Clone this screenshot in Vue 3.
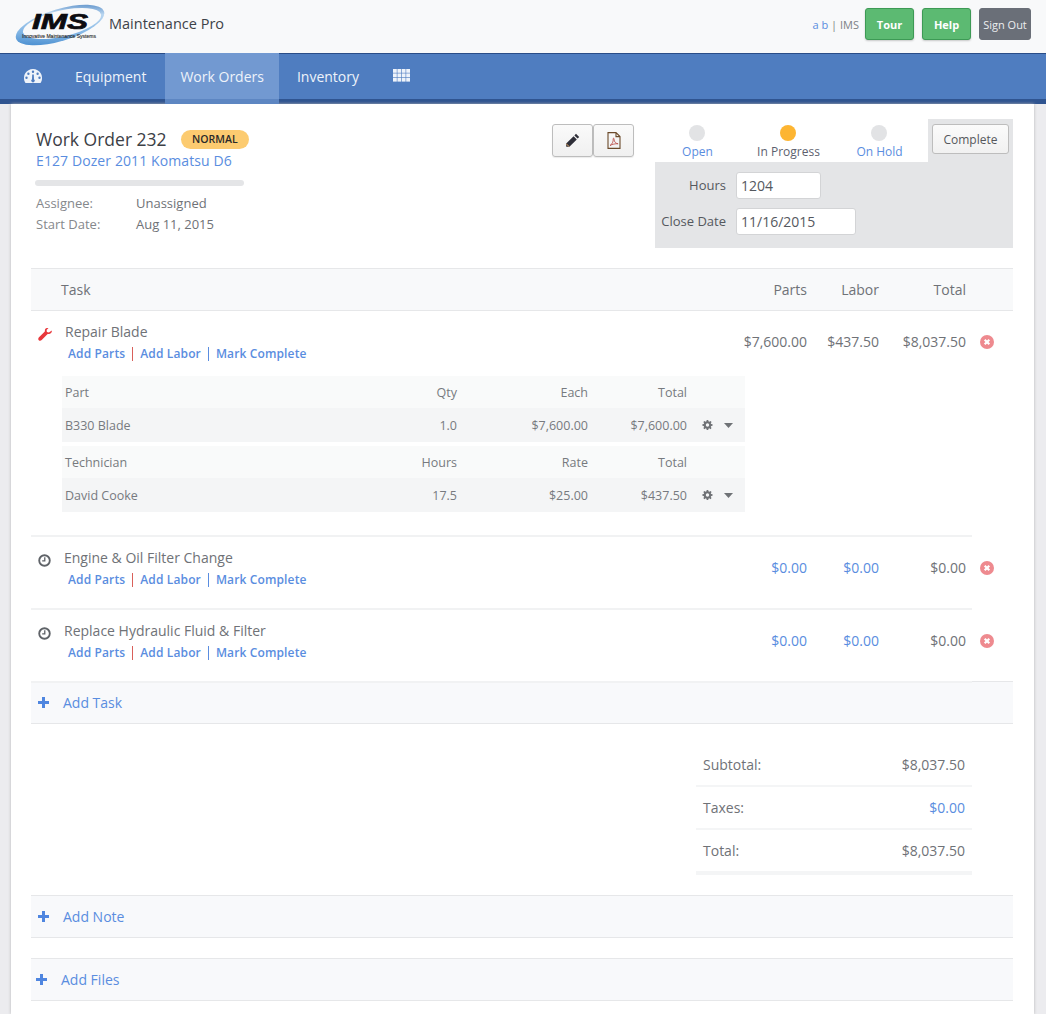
<script setup>
const tasks = [
  { name: 'Repair Blade', icon: 'wrench', parts: '$7,600.00', labor: '$437.50', total: '$8,037.50', zero: false, detail: true },
  { name: 'Engine & Oil Filter Change', icon: 'clock', parts: '$0.00', labor: '$0.00', total: '$0.00', zero: true },
  { name: 'Replace Hydraulic Fluid & Filter', icon: 'clock', parts: '$0.00', labor: '$0.00', total: '$0.00', zero: true }
]
const subtables = [
  { head: ['Part', 'Qty', 'Each', 'Total'], row: ['B330 Blade', '1.0', '$7,600.00', '$7,600.00'] },
  { head: ['Technician', 'Hours', 'Rate', 'Total'], row: ['David Cooke', '17.5', '$25.00', '$437.50'] }
]
const gear = 'M8 1.2h1.9l.3 1.7 1.1.5 1.5-1 1.3 1.3-1 1.5.5 1.1 1.7.3v1.9l-1.7.3-.5 1.1 1 1.5-1.3 1.3-1.5-1-1.1.5-.3 1.7H8l-.3-1.7-1.1-.5-1.5 1-1.3-1.3 1-1.5-.5-1.1-1.7-.3V6.6l1.7-.3.5-1.1-1-1.5 1.3-1.3 1.5 1 1.1-.5zM9 5.400a2.100 2.100 0 1 0 0 4.200a2.100 2.100 0 0 0 0-4.200z'
</script>

<template>
  <div class="page">
    <header class="top">
      <div class="brand">
        <svg class="logo" viewBox="0 0 90 42" width="90" height="42">
          <defs>
            <linearGradient id="sw" x1="0" y1="1" x2="1" y2="0">
              <stop offset="0" stop-color="#2a78c4" />
              <stop offset="0.35" stop-color="#7fb4e4" />
              <stop offset="0.7" stop-color="#b9d6f0" />
              <stop offset="1" stop-color="#1f62ae" />
            </linearGradient>
          </defs>
          <ellipse cx="45" cy="21" rx="46" ry="16" transform="rotate(-17 45 21)" fill="url(#sw)" />
          <ellipse cx="47" cy="19.500" rx="40" ry="13" transform="rotate(-13 47 19.500)" fill="#f8f9fa" />
          <text x="17" y="25" textLength="56" lengthAdjust="spacingAndGlyphs" class="logo-ims">IMS</text>
          <text x="7" y="34" textLength="74" lengthAdjust="spacingAndGlyphs" class="logo-sub">Innovative Maintenance Systems</text>
        </svg>
        <span class="brand-name">Maintenance Pro</span>
      </div>
      <div class="top-right">
        <span class="user"><a>a b</a> | IMS</span>
        <button class="btn-green">Tour</button>
        <button class="btn-green">Help</button>
        <button class="btn-dark">Sign Out</button>
      </div>
    </header>

    <nav class="nav">
      <span class="nav-icon gauge">
        <svg viewBox="0 0 18 14" width="18" height="14">
          <path fill-rule="evenodd" d="M9 0a9 9 0 0 1 8 13.200l-.5.800H1.500l-.5-.800A9 9 0 0 1 9 0zM9 1.500a1.200 1.200 0 1 0 0 2.400 1.200 1.200 0 0 0 0-2.400zM4.400 3.500a1.200 1.200 0 1 0 0 2.400 1.200 1.200 0 0 0 0-2.400zM13.600 3.500a1.200 1.200 0 1 0 0 2.400 1.200 1.200 0 0 0 0-2.400zM2.500 7.500a1.200 1.200 0 1 0 0 2.400 1.200 1.200 0 0 0 0-2.400zM15.500 7.500a1.200 1.200 0 1 0 0 2.400 1.200 1.200 0 0 0 0-2.400zM8.200 5.500l-.2 4.700a1.700 1.700 0 1 0 2 0l-.2-4.700z" fill="#eef3fa" />
        </svg>
      </span>
      <a class="tab tab-eq">Equipment</a>
      <a class="tab active">Work Orders</a>
      <a class="tab tab-inv">Inventory</a>
      <span class="nav-icon grid-ic">
        <svg viewBox="0 0 17 13" width="17" height="13" fill="#eef3fa">
          <template v-for="r in 3" :key="r">
            <rect v-for="c in 4" :key="c" :x="(c - 1) * 4.4" :y="(r - 1) * 4.4" width="3.800" height="3.800" />
          </template>
        </svg>
      </span>
    </nav>

    <main class="card">
      <section class="summary-top">
        <div class="wo-info">
          <div class="wo-title">
            <h1>Work Order 232</h1>
            <span class="badge">NORMAL</span>
          </div>
          <a class="wo-sub">E127 Dozer 2011 Komatsu D6</a>
          <div class="progress"></div>
          <dl class="meta">
            <dt>Assignee:</dt><dd>Unassigned</dd>
            <dt>Start Date:</dt><dd>Aug 11, 2015</dd>
          </dl>
        </div>
        <div class="tools">
          <button class="tool">
            <svg viewBox="0 0 15 15" width="15" height="15">
              <path d="M11 .8l3.200 3.200-1.600 1.600-3.200-3.200zM8.600 3.200l3.200 3.200-7.400 7.400H1.200v-3.200z" fill="#2e2e38" />
              <path d="M1.300 10.800l2.900 2.900" stroke="#a9825a" stroke-width="1.200" />
            </svg>
          </button>
          <button class="tool">
            <svg viewBox="0 0 14 17" width="14" height="17" fill="none" stroke="#6b4a2a" stroke-width="1.100">
              <path d="M1 .6h8l4 4v11.800H1zM9 .6v4h4" />
              <path d="M3 13.500c2-1 3.500-4 3.200-6.500-.1-1.200 1-1 .9.300-.2 2.500 2 4.300 4 4.500-2.500-.3-6 .5-8.100 1.700z" stroke="#b8453f" stroke-width=".8" />
            </svg>
          </button>
        </div>
        <div class="status">
          <div class="status-top">
            <div class="steps">
              <div class="step"><span class="dot"></span><a>Open</a></div>
              <div class="step"><span class="dot on"></span><span class="cur">In Progress</span></div>
              <div class="step"><span class="dot"></span><a>On Hold</a></div>
            </div>
            <div class="complete-wrap"><button class="complete">Complete</button></div>
          </div>
          <div class="status-form">
            <label>Hours</label>
            <input class="in-hours" value="1204" />
            <label>Close Date</label>
            <input class="in-date" value="11/16/2015" />
          </div>
        </div>
      </section>

      <div class="thead cols">
        <span class="c-task">Task</span>
        <span class="num">Parts</span>
        <span class="num">Labor</span>
        <span class="num">Total</span>
      </div>

      <div v-for="t in tasks" :key="t.name" class="task" :class="{ big: t.detail }">
        <div class="cols task-main">
          <div class="t-icon">
            <svg v-if="t.icon === 'wrench'" viewBox="0 0 14 13" width="14" height="13">
              <path d="M13.800 2.500c.4 2-1.300 3.800-3.400 3.500-.4-.1-.7 0-1 .3L3.700 12c-.9.900-2.100 1-2.900.2-.800-.8-.7-2 .2-2.900l5.600-5.600c.3-.3.400-.6.300-1C6.600 1 8.500-.6 10.500.1L8.600 2l.3 2 2 .4z" fill="#e8383c" />
            </svg>
            <svg v-else viewBox="0 0 14 14" width="13" height="13" fill="none" stroke="#5f6368">
              <circle cx="7" cy="7" r="5.700" stroke-width="2" />
              <path d="M7.300 3.500v3.800H4.500" stroke-width="1.400" />
            </svg>
          </div>
          <div class="t-body">
            <div class="t-name">{{ t.name }}</div>
            <div class="t-links">
              <a>Add Parts</a><i class="red"></i><a>Add Labor</a><i></i><a>Mark Complete</a>
            </div>
          </div>
          <span class="num amt" :class="{ link: t.zero }">{{ t.parts }}</span>
          <span class="num amt" :class="{ link: t.zero }">{{ t.labor }}</span>
          <span class="num amt">{{ t.total }}</span>
          <span class="amt rm">
            <svg viewBox="0 0 14 14" width="14" height="14">
              <circle cx="7" cy="7" r="7" fill="#ee8a8f" />
              <path d="M4.700 4.700l4.600 4.600M9.300 4.700l-4.600 4.600" stroke="#fff" stroke-width="2.200" />
            </svg>
          </span>
        </div>
        <div v-if="t.detail" class="subs">
          <div v-for="s in subtables" :key="s.head[0]" class="sub">
            <div class="sub-row sub-head">
              <span>{{ s.head[0] }}</span><span class="r">{{ s.head[1] }}</span><span class="r">{{ s.head[2] }}</span><span class="r">{{ s.head[3] }}</span>
            </div>
            <div class="sub-row sub-data">
              <span>{{ s.row[0] }}</span><span class="r">{{ s.row[1] }}</span><span class="r">{{ s.row[2] }}</span><span class="r">{{ s.row[3] }}</span>
              <span class="sub-act">
                <svg viewBox="1 0 16 15" width="13" height="12"><path fill-rule="evenodd" :d="gear" fill="#6f7276" /></svg>
                <svg viewBox="0 0 9 5" width="9" height="5"><path d="M0 0h9L4.500 5z" fill="#6f7276" /></svg>
              </span>
            </div>
          </div>
        </div>
      </div>

      <div class="band band-task">
        <svg viewBox="0 0 11 11" width="11" height="11"><path d="M4 0h3v4h4v3H7v4H4V7H0V4h4z" fill="#4f86e0" /></svg>
        <a>Add Task</a>
      </div>

      <div class="totals">
        <div class="tot-row"><span>Subtotal:</span><span>$8,037.50</span></div>
        <div class="tot-row"><span>Taxes:</span><a>$0.00</a></div>
        <div class="tot-row last"><span>Total:</span><span>$8,037.50</span></div>
      </div>

      <div class="band band-note">
        <svg viewBox="0 0 11 11" width="11" height="11"><path d="M4 0h3v4h4v3H7v4H4V7H0V4h4z" fill="#4f86e0" /></svg>
        <a>Add Note</a>
      </div>
      <div class="band band-files">
        <svg viewBox="0 0 11 11" width="11" height="11"><path d="M4 0h3v4h4v3H7v4H4V7H0V4h4z" fill="#4f86e0" /></svg>
        <a>Add Files</a>
      </div>
    </main>
  </div>
</template>

<style>
html, body { margin: 0; background: #ececef; }
</style>

<style scoped>
* { box-sizing: border-box; }
.page { font-family: "Open Sans", "Liberation Sans", sans-serif; font-size: 13px; color: #6f7277; height: 1014px; overflow: hidden; }
a { color: #5a8de0; }

.top { height: 53px; background: #f8f9fa; display: flex; justify-content: space-between; align-items: flex-start; padding-left: 15px; }
.brand { display: flex; align-items: center; height: 46px; }
.logo { display: block; margin-top: 4px; }
.logo-ims { font-family: "Liberation Sans", sans-serif; font-weight: 700; font-style: italic; font-size: 22px; fill: #0c0c10; stroke: #0c0c10; stroke-width: .7px; }
.logo-sub { font-family: "Liberation Sans", sans-serif; font-size: 5px; fill: #222; stroke: #222; stroke-width: .1px; }
.brand-name { margin-left: 4px; font-size: 14.500px; color: #3d4248; font-weight: 500; }
.top-right { display: flex; align-items: center; padding: 8px 15px 0 0; }
.user { font-size: 11px; color: #7d8186; margin-right: 6px; }
.btn-green, .btn-dark { height: 32px; border-radius: 3px; font-family: inherit; font-size: 11px; padding: 0; }
.btn-green { width: 49px; margin-right: 8px; background: #5cba72; border: 1px solid #3d9a55; color: #fff; font-weight: 700; box-shadow: 0 1px 2px rgba(0,0,0,.2); }
.btn-dark { width: 52px; background: #6a6f78; border: 1px solid #6a6f78; color: #eceef0; }

.nav { height: 51px; background: #4f7dc0; border-top: 1px solid #2a4d88; border-bottom: 5px solid #2f5490; display: flex; align-items: stretch; color: #eef3fa; font-size: 14px; }
.nav-icon { display: flex; align-items: center; }
.gauge { margin-left: 24px; margin-top: -1px; }
.grid-ic { margin-left: 19px; margin-top: -3px; }
.tab { color: #eef3fa; display: flex; align-items: center; padding: 0 15px; margin-top: -1px; }
.tab-eq { margin-left: 18px; margin-right: 4px; }
.tab.active { background: #7299d1; color: #eef3fa; height: 46px; margin-bottom: -5px; box-shadow: 0 5px 0 #5d86c2; }
.tab-inv { margin-left: 3px; }

.card { margin: 0 12px 0 11px; background: #fff; min-height: 910px; padding: 0 21px 0 20px; box-shadow: 0 0 3px #b5b5b8; display: flow-root; width: 1023px; }

.summary-top { height: 164px; display: flex; align-items: flex-start; position: relative; padding-top: 15px; }
.wo-info { width: 521px; padding: 9px 0 0 5px; }
.wo-title { display: flex; align-items: center; height: 22px; }
.wo-title h1 { margin: 0; font-size: 17.500px; font-weight: 400; color: #3c4046; line-height: 22px; }
.badge { margin-left: 14px; background: #fccb70; color: #2a2a2a; font-size: 10.500px; font-weight: 600; height: 19px; line-height: 19px; border-radius: 10px; padding: 0 11.500px; }
.wo-sub { display: block; font-size: 14px; line-height: 20px; letter-spacing: .1px; padding-top: 1px; height: 21px; }
.progress { width: 209px; height: 6px; margin: 9px 0 0 -1px; background: #e4e5e7; border-radius: 3px; }
.meta { display: grid; grid-template-columns: 100px 1fr; margin: 7px 0 0; row-gap: 1px; line-height: 20px; }
.meta dt { color: #85888c; }
.meta dd { margin: 0; color: #6f7277; }

.tools { display: flex; padding-top: 5px; width: 103px; }
.tool { width: 41px; height: 33px; background: linear-gradient(#fafafa, #f0f0f0); border: 1px solid #bdbdbd; border-radius: 3px; display: flex; align-items: center; justify-content: center; padding: 0; box-shadow: 0 1px 1px rgba(0,0,0,.08); }
.status { width: 358px; background: #e4e5e7; height: 129px; }
.status-top { display: flex; height: 43px; }
.steps { width: 273px; background: #fff; display: flex; }
.step { width: 91px; display: flex; flex-direction: column; align-items: center; font-size: 12px; padding-top: 6px; line-height: 18px; }
.steps .step:first-child { margin-left: -3px; }
.dot { width: 16px; height: 16px; border-radius: 50%; background: #e2e3e5; margin: 0 2px 2px 0; }
.dot.on { background: #fdb532; }
.cur { color: #5d5f6e; }
.complete-wrap { flex: 1; padding: 5px 0 0 4px; }
.complete { width: 77px; height: 30px; font-family: inherit; font-size: 12px; color: #55585c; background: linear-gradient(#fbfbfb, #f1f1f1); border: 1px solid #bdbdbd; border-radius: 3px; padding: 0; }
.status-form { display: grid; grid-template-columns: 71px auto; column-gap: 10px; row-gap: 9px; align-items: center; justify-items: start; padding-top: 10px; }
.status-form label { justify-self: end; font-size: 13px; color: #55585e; white-space: nowrap; margin-bottom: 2px; }
.status-form input { font-family: inherit; font-size: 14px; color: #55585e; height: 27px; border: 1px solid #d3d4d6; border-radius: 3px; padding: 0 4px; background: #fff; outline: 0; }
.in-hours { width: 85px; }
.in-date { width: 120px; }

.cols { display: grid; grid-template-columns: 34px 1fr 100px 72px 87px 47px; }
.thead { height: 43px; background: #f8f9fa; border-top: 1px solid #e6e7e9; border-bottom: 1px solid #e6e7e9; align-items: center; font-size: 14px; color: #6f7277; }
.c-task { grid-column: 1 / 3; padding-left: 30px; }
.num { text-align: right; }

.task { width: 941px; height: 73px; border-bottom: 2px solid #f1f2f3; padding-top: 11px; position: relative; }
.task:last-of-type { border-bottom: 0; }
.task.big { height: 226px; }
.task-main { width: 982px; align-items: start; font-size: 14px; }
.t-icon { padding: 4px 0 0 7px; height: 20px; }
.t-name { line-height: 20px; font-size: 14px; color: #6f7277; }
.task:not(.big) .t-name { margin-left: -1px; }
.t-links { margin: 2px 0 0 3px; display: flex; align-items: center; line-height: 20px; font-size: 12px; font-weight: 600; letter-spacing: .13px; }
.t-links i { width: 1px; height: 14px; background: #5a8de0; margin: 0 7px; }
.t-links i.red { background: #d9605a; }
.amt { padding-top: 10px; line-height: 20px; }
.amt.link { color: #5a8de0; }
.rm { padding: 13px 0 0 14px; }
.rm svg { display: block; }

.subs { width: 683px; margin: 12px 0 0 31px; }
.sub { font-size: 12.500px; }
.sub + .sub { margin-top: 4px; }
.sub-row { display: grid; grid-template-columns: 300px 92px 131px 99px 58px; align-items: center; padding-left: 3px; color: #777a7f; }
.r { text-align: right; }
.sub-head { height: 32px; background: #f9fafa; }
.sub-data { height: 34px; background: #f4f5f6; }
.sub-act { display: flex; align-items: center; gap: 10px; padding-left: 14px; }

.band { display: flex; align-items: center; background: #f8f9fb; border-top: 1px solid #e6e7e9; border-bottom: 1px solid #e6e7e9; height: 43px; font-size: 14px; padding-left: 7px; }
.band a { margin-left: 14px; }
.band-task { margin-top: -2px; }
.band-note { margin-top: 20px; }
.band-files { margin-top: 20px; padding-left: 5px; }

.totals { width: 276px; margin: 20px 0 0 665px; font-size: 14px; }
.tot-row { display: flex; justify-content: space-between; align-items: center; height: 43px; padding: 0 7px; border-bottom: 2px solid #f4f5f6; }
.tot-row.last { height: 45px; border-bottom-width: 4px; }
</style>
